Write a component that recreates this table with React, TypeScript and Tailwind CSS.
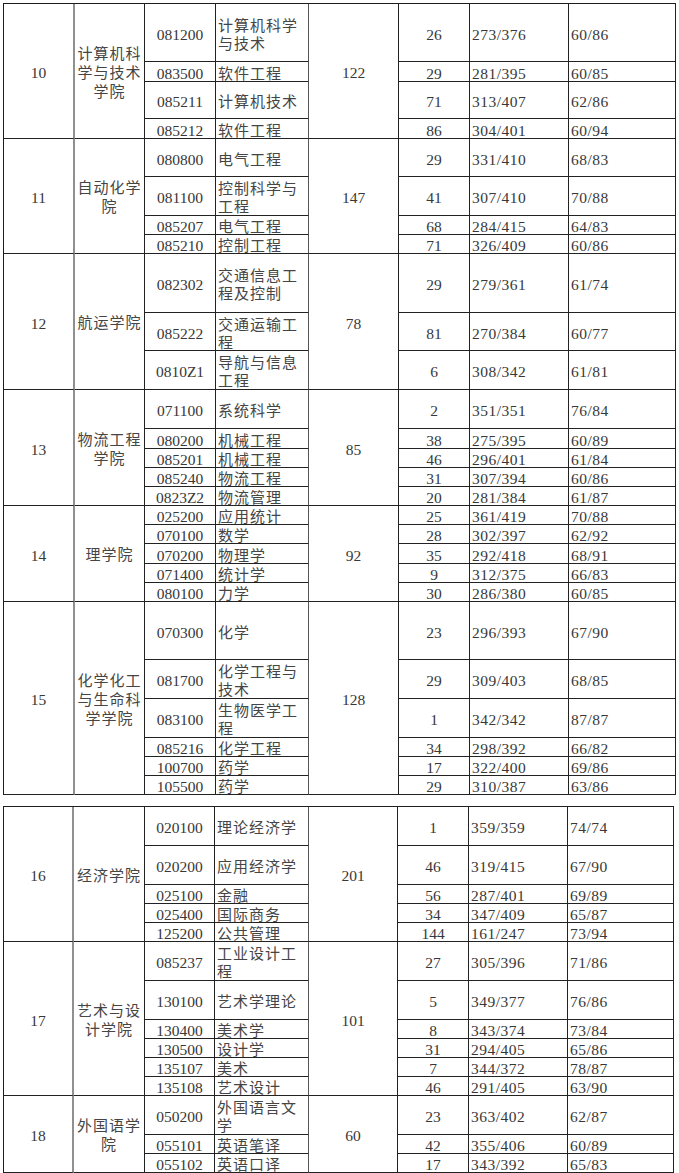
import React from "react";

type Row = [string, string, string, string, string, number];
type Section = { no: string; name: string; total: string; rows: Row[] };

const H: Record<number, string> = {
  19: "h-[19px]",
  20: "h-[20px]",
  37: "h-[37px]",
  38: "h-[38px]",
  39: "h-[39px]",
  58: "h-[58px]",
  59: "h-[59px]",
};

const top: Section[] = [
  {
    no: "10",
    name: "计算机科学与技术学院",
    total: "122",
    rows: [
      ["081200", "计算机科学与技术", "26", "273/376", "60/86", 58],
      ["083500", "软件工程", "29", "281/395", "60/85", 20],
      ["085211", "计算机技术", "71", "313/407", "62/86", 37],
      ["085212", "软件工程", "86", "304/401", "60/94", 20],
    ],
  },
  {
    no: "11",
    name: "自动化学院",
    total: "147",
    rows: [
      ["080800", "电气工程", "29", "331/410", "68/83", 38],
      ["081100", "控制科学与工程", "41", "307/410", "70/88", 39],
      ["085207", "电气工程", "68", "284/415", "64/83", 19],
      ["085210", "控制工程", "71", "326/409", "60/86", 19],
    ],
  },
  {
    no: "12",
    name: "航运学院",
    total: "78",
    rows: [
      ["082302", "交通信息工程及控制", "29", "279/361", "61/74", 59],
      ["085222", "交通运输工程", "81", "270/384", "60/77", 38],
      ["0810Z1", "导航与信息工程", "6", "308/342", "61/81", 39],
    ],
  },
  {
    no: "13",
    name: "物流工程学院",
    total: "85",
    rows: [
      ["071100", "系统科学", "2", "351/351", "76/84", 39],
      ["080200", "机械工程", "38", "275/395", "60/89", 20],
      ["085201", "机械工程", "46", "296/401", "61/84", 19],
      ["085240", "物流工程", "31", "307/394", "60/86", 19],
      ["0823Z2", "物流管理", "20", "281/384", "61/87", 19],
    ],
  },
  {
    no: "14",
    name: "理学院",
    total: "92",
    rows: [
      ["025200", "应用统计", "25", "361/419", "70/88", 19],
      ["070100", "数学", "28", "302/397", "62/92", 19],
      ["070200", "物理学", "35", "292/418", "68/91", 20],
      ["071400", "统计学", "9", "312/375", "66/83", 19],
      ["080100", "力学", "30", "286/380", "60/85", 19],
    ],
  },
  {
    no: "15",
    name: "化学化工与生命科学学院",
    total: "128",
    rows: [
      ["070300", "化学", "23", "296/393", "67/90", 58],
      ["081700", "化学工程与技术", "29", "309/403", "68/85", 39],
      ["083100", "生物医学工程", "1", "342/342", "87/87", 39],
      ["085216", "化学工程", "34", "298/392", "66/82", 19],
      ["100700", "药学", "17", "322/400", "69/86", 19],
      ["105500", "药学", "29", "310/387", "63/86", 19],
    ],
  },
];

const bottom: Section[] = [
  {
    no: "16",
    name: "经济学院",
    total: "201",
    rows: [
      ["020100", "理论经济学", "1", "359/359", "74/74", 39],
      ["020200", "应用经济学", "46", "319/415", "67/90", 39],
      ["025100", "金融", "56", "287/401", "69/89", 19],
      ["025400", "国际商务", "34", "347/409", "65/87", 19],
      ["125200", "公共管理", "144", "161/247", "73/94", 19],
    ],
  },
  {
    no: "17",
    name: "艺术与设计学院",
    total: "101",
    rows: [
      ["085237", "工业设计工程", "27", "305/396", "71/86", 39],
      ["130100", "艺术学理论", "5", "349/377", "76/86", 39],
      ["130400", "美术学", "8", "343/374", "73/84", 19],
      ["130500", "设计学", "31", "294/405", "65/86", 19],
      ["135107", "美术", "7", "344/372", "78/87", 19],
      ["135108", "艺术设计", "46", "291/405", "63/90", 19],
    ],
  },
  {
    no: "18",
    name: "外国语学院",
    total: "60",
    rows: [
      ["050200", "外国语言文学", "23", "363/402", "62/87", 39],
      ["055101", "英语笔译", "42", "355/406", "60/89", 19],
      ["055102", "英语口译", "17", "343/392", "65/83", 19],
    ],
  },
];

const cell = "p-0 align-middle border-b border-r border-b-[#222] border-r-[#222]";
const num = "text-[15.5px] leading-[18px]";
const zh = "text-[15px] tracking-[1px] text-[#454545]";

function Table({
  sections,
  widths,
  tableClass,
}: {
  sections: Section[];
  widths: string[];
  tableClass: string;
}) {
  return (
    <table
      className={`table-fixed border-separate border-spacing-0 border-t border-l border-[#1e1e1e] ${tableClass}`}
    >
      <colgroup>
        {widths.map((w, i) => (
          <col key={i} className={w} />
        ))}
      </colgroup>
      <tbody>
        {sections.map((s) =>
          s.rows.map((r, i) => (
            <tr key={s.no + r[0]} className={H[r[5]]}>
              {i === 0 && (
                <td
                  rowSpan={s.rows.length}
                  className={`${cell} border-r-2 border-r-[#909090] text-center`}
                >
                  <div className={`${num} translate-y-[2px]`}>{s.no}</div>
                </td>
              )}
              {i === 0 && (
                <td rowSpan={s.rows.length} className={`${cell} text-center`}>
                  <div className={`${zh} leading-[19px] translate-y-[2px]`}>{s.name}</div>
                </td>
              )}
              <td className={`${cell} border-r-[#6f6f6f] text-center`}>
                <div className={`${num} translate-y-[2px]`}>{r[0]}</div>
              </td>
              <td className={`${cell} border-r-[#555] pl-[2px]`}>
                <div className={`${zh} leading-[18px] translate-y-[2px]`}>{r[1]}</div>
              </td>
              {i === 0 && (
                <td rowSpan={s.rows.length} className={`${cell} text-center`}>
                  <div className={`${num} translate-y-[2px]`}>{s.total}</div>
                </td>
              )}
              <td className={`${cell} text-center`}>
                <div className={`${num} translate-y-[2px]`}>{r[2]}</div>
              </td>
              <td className={`${cell} pl-[2px]`}>
                <div className={`${num} tracking-[0.5px] translate-y-[2px]`}>{r[3]}</div>
              </td>
              <td className={`${cell} border-r-[#2a2a2a] pl-[2px]`}>
                <div className={`${num} tracking-[0.5px] translate-y-[2px]`}>{r[4]}</div>
              </td>
            </tr>
          ))
        )}
      </tbody>
    </table>
  );
}

export default function App() {
  return (
    <div className="w-[679px] h-[1173px] overflow-hidden bg-white pt-[3px] pl-[3px] font-['Liberation_Serif','Noto_Sans_CJK_SC',serif] text-[#383838]">
      <Table
        sections={top}
        tableClass="w-[673px]"
        widths={[
          "w-[71px]",
          "w-[70px]",
          "w-[71px]",
          "w-[93px]",
          "w-[90px]",
          "w-[71px]",
          "w-[99px]",
          "w-[107px]",
        ]}
      />
      <Table
        sections={bottom}
        tableClass="w-[671px] mt-[11px]"
        widths={[
          "w-[70px]",
          "w-[71px]",
          "w-[70px]",
          "w-[94px]",
          "w-[89px]",
          "w-[71px]",
          "w-[99px]",
          "w-[106px]",
        ]}
      />
    </div>
  );
}
